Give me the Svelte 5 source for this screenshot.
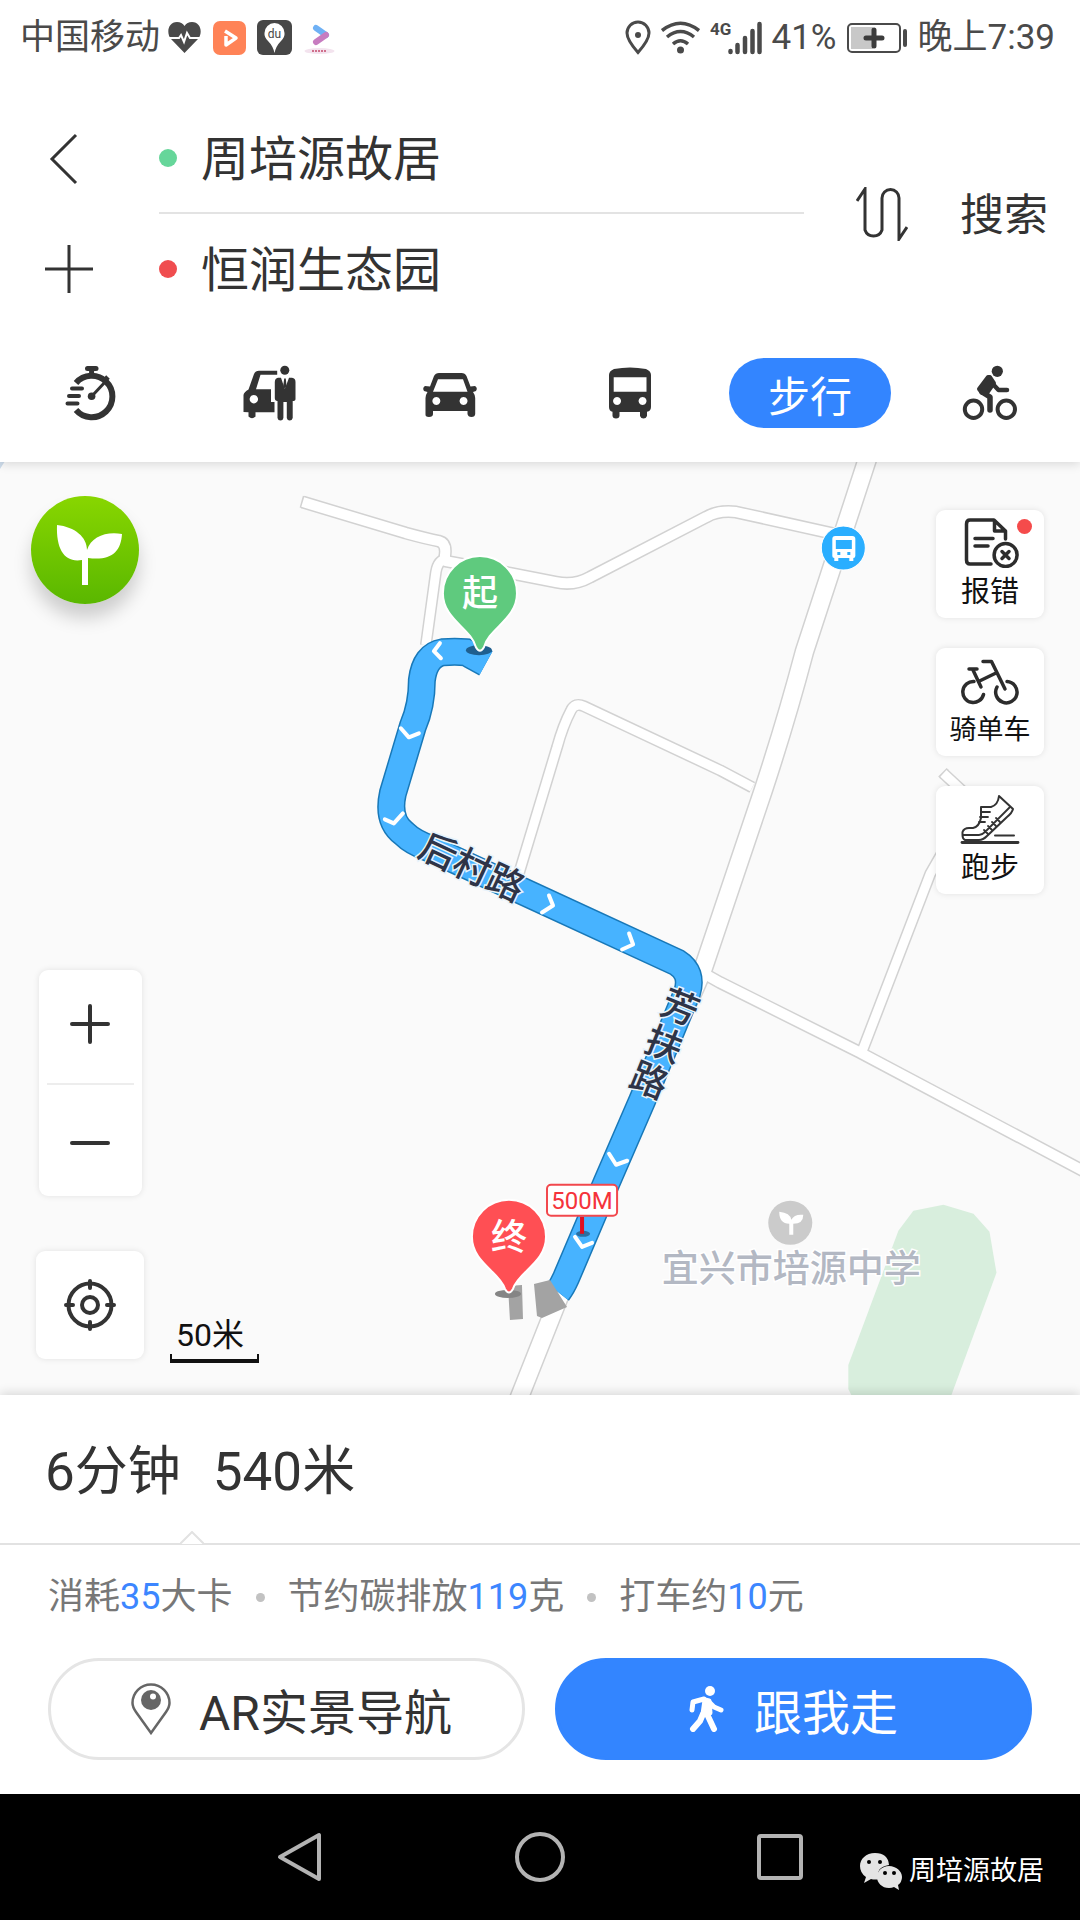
<script>
  let from = '周培源故居';
  let to = '恒润生态园';
  let mode = 'walk';

  const modes = [
    { id: 'smart', label: '智能' },
    { id: 'taxi', label: '打车' },
    { id: 'car', label: '驾车' },
    { id: 'bus', label: '公交' },
    { id: 'walk', label: '步行' },
    { id: 'bike', label: '骑行' },
  ];

  const stats = [
    { before: '消耗', value: 35, after: '大卡' },
    { before: '节约碳排放', value: 119, after: '克' },
    { before: '打车约', value: 10, after: '元' },
  ];

  // Minor roads are 13 wide, the main road is 20
  const roads = [
    { w: 13, d: 'M303 502L406 533Q428 539 439 541Q447 543 445 556L446 561L510 573L556 582Q574 586 590 577L706 517Q718 510 736 512L835 534' },
    { w: 12, d: 'M446 559Q438 560 436 572L426 645' },
    { w: 20, d: 'M870 450L804 652Q786 720 763 790L703 968Q690 1000 683 1010L560 1294L516 1405' },
    { w: 12, d: 'M518 876L557 747Q563 725 571 710Q575 702 584 706L720 770L752 787' },
    { w: 13, d: 'M704 973L720 982L860 1052L1090 1174' },
    { w: 12, d: 'M862 1050L930 873L972 800L943 773' },
  ];

  const routePath =
    'M486 663L466 652Q455 651 443 652Q425 655 422 680Q422 705 413 726L393 793Q387 820 404 833Q413 842 430 848L677 962Q693 972 687 992L642 1100L606 1183L566 1277Q562 1286 558 1291';

  const arrows = [
    '440,643 434,651 441,658',
    '401,728 409,737 419,733',
    '385,819 394,823 403,813',
    '549,895 553,905 542,912',
    '629,933 633,944 622,949',
    '609,1153 616,1164 627,1160',
    '575,1236 582,1246 592,1242',
  ];

  const roadLetters = [
    { char: '芳', x: 680, y: 1007 },
    { char: '扶', x: 664, y: 1044 },
    { char: '路', x: 649, y: 1080 },
  ];
</script>

<div class="screen">
  <header class="top">
    <div class="status">
      <div class="status-side">
        <span>中国移动</span>
        <div class="apps">
          <svg width="35" height="33" viewBox="0 0 35 33">
            <path d="M17.500 32L4 18C-1 12 1 1 10 1Q15 1 17.500 5Q20 1 25 1C34 1 36 12 31 18Z" fill="#4a4a4a" />
            <path d="M0 17H12L14 14L17 21L20 12L23 17H35" fill="none" stroke="#fff" stroke-width="2" />
          </svg>
          <svg width="33" height="34" viewBox="0 0 33 34">
            <rect width="33" height="34" rx="7" fill="#ff8357" />
            <path d="M13 15V24L23 17L12 10" fill="none" stroke="#fff" stroke-width="3.500" stroke-linejoin="round" />
          </svg>
          <svg width="35" height="35" viewBox="0 0 35 35">
            <rect width="35" height="35" rx="6" fill="#474747" />
            <path d="M17.500 33Q16 26 11 21Q7 17 7.500 13A10 10 0 0 1 27.500 13Q28 17 24 21Q19 26 17.500 33Z" fill="#fff" />
            <text x="17.500" y="18" font-size="12" text-anchor="middle" fill="#474747">du</text>
          </svg>
          <svg width="33" height="34" viewBox="0 0 33 34">
            <ellipse cx="16.500" cy="30" rx="15" ry="3" fill="#f3e3ee" />
            <path d="M9 30H24" stroke="#d0708c" stroke-width="2" stroke-dasharray="2 1" />
            <path d="M13 7L23 14" stroke="#6fb1f5" stroke-width="6" stroke-linecap="round" />
            <path d="M23 14L13 21" stroke="#c77cc0" stroke-width="6" stroke-linecap="round" />
          </svg>
        </div>
      </div>
      <div class="status-side signals">
        <svg width="26" height="35" viewBox="0 0 26 35" fill="none" stroke="#4a4a4a" stroke-width="3">
          <path d="M13 32.500Q2 20 2 13A11 11 0 0 1 24 13Q24 20 13 32.500Z" />
          <circle cx="13" cy="15" r="3" fill="#4a4a4a" stroke="none" />
        </svg>
        <svg width="39" height="33" viewBox="0 0 39 33" fill="none" stroke="#4a4a4a" stroke-width="3.500">
          <path d="M1 9.500Q19.500-5 38 9.500M6 16Q19.500 5 33 16M12 23Q19.500 16.500 27 23" />
          <circle cx="19.500" cy="29" r="3.500" fill="#4a4a4a" stroke="none" />
        </svg>
        <svg width="52" height="35" viewBox="0 0 52 35" stroke="#4a4a4a" stroke-width="4.500" stroke-linecap="round">
          <path d="M20.500 31V32M27.500 25V32M35 18V32M42.500 11V32M49.500 4V32" />
          <text x="0" y="15" font-size="17" font-weight="700" stroke="none" fill="#4a4a4a" class="narrow">4G</text>
        </svg>
        <span>41%</span>
        <svg width="61" height="30" viewBox="0 0 61 30">
          <rect x="1" y="1" width="52" height="28" rx="4" fill="none" stroke="#4a4a4a" stroke-width="2" />
          <rect x="4" y="4" width="22" height="22" fill="#c8c8c8" />
          <path d="M27 7V23M19 15H35" stroke="#3c3c3c" stroke-width="5" stroke-linecap="round" />
          <path d="M58 8V22" stroke="#4a4a4a" stroke-width="4" stroke-linecap="round" />
        </svg>
        <span>晚上7:39</span>
      </div>
    </div>

    <form class="planner" on:submit|preventDefault>
      <div class="planner-side">
        <button type="button" aria-label="返回">
          <svg width="60" height="60" viewBox="0 0 60 60"><path d="M40 6L16 30L40 54" /></svg>
        </button>
        <button type="button" aria-label="添加途经点">
          <svg width="60" height="60" viewBox="0 0 60 60"><path d="M9 30H57M33 6V54" /></svg>
        </button>
      </div>
      <div class="fields">
        <label class="field">
          <span class="dot start"></span>
          <input type="text" aria-label="起点" bind:value={from} />
        </label>
        <label class="field">
          <span class="dot end"></span>
          <input type="text" aria-label="终点" bind:value={to} />
        </label>
      </div>
      <button type="button" class="swap" aria-label="交换起终点">
        <svg width="52" height="54" viewBox="0 0 52 54">
          <path d="M1 14L9 2V43A9 9 0 0 0 26 43V11A8 8 0 0 1 43 11V52L51 40" />
        </svg>
      </button>
      <button type="submit" class="search">搜索</button>
    </form>

    <nav class="modes">
      {#each modes as m}
        <button class:active={mode === m.id} aria-label={m.label} on:click={() => (mode = m.id)}>
          {#if m.id === 'smart'}
            <svg width="64" height="64" viewBox="0 0 64 64" fill="none" stroke="#333">
              <path d="M18 22A20.700 20.700 0 1 1 18 49" stroke-width="6" />
              <path d="M14 27.500H24M11 35H21M9.500 42.500H19.500" stroke-width="4" stroke-linecap="round" />
              <path d="M29.500 7.500H38" stroke-width="5" stroke-linecap="round" />
              <path d="M33.600 8V15M46 20L50 16" stroke-width="5" />
              <path d="M34 35L48 20" stroke-width="3" />
              <circle cx="33.600" cy="35.300" r="3.800" fill="#333" stroke="none" />
            </svg>
          {:else if m.id === 'taxi'}
            <svg width="64" height="64" viewBox="0 0 64 64" fill="#333">
              <path fill-rule="evenodd" d="M5.500 51V34Q6 31 10.500 28.500L16 13Q17.500 9.700 21 9.700H39.200V13.700H22.500L18 28.300H33V41H36.500V51.300H17.500V55.500Q14 59 10.500 55.500V51.300ZM15.800 34A4.200 4.200 0 1 0 15.900 34Z" />
              <circle cx="46.800" cy="9.300" r="4.500" />
              <path d="M40 16.700H43L46.800 28L51 16.700H54Q57.500 17 57.500 21V38Q57.500 40 54.700 40V57Q54 59.500 51.700 59.500T48.800 57V41H45.400V57Q45 59.500 42.500 59.500T39.500 57V40Q36.800 40 36.800 37V21Q37 17 40 16.700Z" />
              <path d="M46.200 17.500H47.800L48.500 25L46.800 28L45.200 25Z" />
            </svg>
          {:else if m.id === 'car'}
            <svg width="64" height="64" viewBox="0 0 64 64" fill="#333">
              <path fill-rule="evenodd" d="M16 15Q17.500 12 21 12H43.500Q47 12 48.500 15L52.500 25.500L57 25Q60 27 58 30L55 31Q57.200 34 57.200 37V53Q57 56 53.500 56T49.500 53V50H15V53Q15 56 11 56T7.500 53V37Q7.500 34 9.500 31L6 30Q4 27 7 25L12 25.500ZM20 18.300L15 30.700H49.500L45 18.300ZM18.300 36A4 4 0 1 0 18.400 36ZM45.500 36A4 4 0 1 0 45.600 36Z" />
            </svg>
          {:else if m.id === 'bus'}
            <svg width="64" height="64" viewBox="0 0 64 64" fill="#333">
              <path fill-rule="evenodd" d="M11 14Q11 10 16 8Q32 5 48 8Q53 10 53 14V46Q53 50 49 50.700V55Q48 57.500 45.500 57.500T42 55V51H21.500V55Q21 57.500 18 57.500T14.500 55V50.700Q11 50 11 46ZM15.700 16.300V30.700H48.500V16.300ZM19 36A4 4 0 1 0 19.100 36ZM44.500 36A4 4 0 1 0 44.600 36Z" />
            </svg>
          {:else if m.id === 'bike'}
            <svg width="64" height="64" viewBox="0 0 64 64" fill="none" stroke="#333">
              <circle cx="39.300" cy="10.300" r="5.600" fill="#333" stroke="none" />
              <circle cx="15.500" cy="48.300" r="8.700" stroke-width="4" />
              <circle cx="48.300" cy="48.300" r="8.700" stroke-width="4" />
              <path d="M32 20L40.500 29H49" stroke-width="4.500" stroke-linecap="round" stroke-linejoin="round" />
              <path d="M24 31L32 36V49" stroke-width="5.500" stroke-linecap="round" stroke-linejoin="round" />
              <path d="M30 16L21 28L24 32H29L36 22L32 16Z" fill="#333" stroke-width="4" stroke-linejoin="round" />
            </svg>
          {:else}
            {m.label}
          {/if}
        </button>
      {/each}
    </nav>
  </header>

  <main class="map">
    <svg class="canvas" viewBox="0 462 1080 932" preserveAspectRatio="xMidYMid slice">
      <path d="M0 462H5L0 470Z" fill="#cddbea" />
      <path d="M848 1364L898 1230L913 1210L943 1204L973 1213L989 1231L996 1272L951 1394H851L848 1388Z" fill="#d8eedd" />

      <g fill="none" stroke="#d2d2d2" stroke-linejoin="round">
        {#each roads as road}
          <path d={road.d} stroke-width={road.w} />
        {/each}
        <path d="M301.500 501.600L304 502.300M942 772L944 774" stroke-width="12" />
      </g>
      <g fill="none" stroke="#fff" stroke-linejoin="round">
        {#each roads as road}
          <path d={road.d} stroke-width={road.w - 3} />
        {/each}
      </g>

      <path d={routePath} fill="none" stroke="#1878b8" stroke-width="28" />
      <path d={routePath} fill="none" stroke="#47b3ff" stroke-width="25" />
      <g fill="none" stroke="#fff" stroke-width="4" stroke-linecap="round" stroke-linejoin="round">
        {#each arrows as points}
          <polyline {points} />
        {/each}
      </g>

      <path d="M534 1283L550 1279L567 1306L542 1317L537 1315ZM508 1285L522 1284L523 1318L510 1319Z" fill="#a3a3a3" />

      <g class="road-name">
        <text x="472" y="880" transform="rotate(25 472 867)">后村路</text>
        {#each roadLetters as l}
          <text x={l.x} y={l.y + 13} transform="rotate(22 {l.x} {l.y})">{l.char}</text>
        {/each}
      </g>

      <ellipse cx="479" cy="650" rx="13" ry="5" fill="#1f5f8f" />
      <path d="M480 556A37 37 0 0 1 517 593C517 619 489 628 484 647Q480 654 476 647C471 628 443 619 443 593A37 37 0 0 1 480 556Z" fill="#5fca7e" stroke="#fff" stroke-width="2" />
      <text class="pin" x="480" y="606">起</text>

      <ellipse cx="508" cy="1293" rx="13" ry="4" fill="#858585" />
      <path d="M509 1199A37 37 0 0 1 546 1236C546 1262 518 1271 513 1288Q509 1295 505 1288C500 1271 472 1262 472 1236A37 37 0 0 1 509 1199Z" fill="#ff4f54" stroke="#fff" stroke-width="2" />
      <text class="pin" x="509" y="1249">终</text>

      <ellipse cx="583" cy="1233" rx="7" ry="3" fill="#2a6fa3" />
      <path d="M582 1216V1233" stroke="#e01020" stroke-width="4" />
      <rect x="547" y="1184" width="70" height="31" rx="4" fill="#fff" stroke="#f2484d" stroke-width="2" />
      <text x="582" y="1208" font-size="24" text-anchor="middle" fill="#f5333b">500M</text>

      <circle cx="843" cy="548" r="22" fill="#2aaeff" stroke="#fff" stroke-width="1" />
      <path fill-rule="evenodd" fill="#fff" d="M832 539Q832 536 835 536H852Q855 536 855 539V556Q855 558 853 558V561H849V558H838V561H834V558Q832 558 832 556ZM835.500 540V549H851.500V540ZM837 552V555H840V552ZM847 552V555H850V552Z" />

      <circle cx="790" cy="1222" r="22" fill="#cbcbcb" />
      <path d="M779 1211Q790 1212 791 1219Q794 1213 803 1214Q803 1223 793 1223V1234H789V1223Q779 1223 779 1211Z" fill="#fff" />
      <text class="place" x="791" y="1281">宜兴市培源中学</text>
    </svg>

    <button class="green-trip" aria-label="绿色出行">
      <svg width="108" height="108" viewBox="0 0 108 108" fill="#fff">
        <path d="M26 29C44 31 56 41 56 54C60 41 75 35 91 38C90 56 80 65 57 62V89H51V64C34 67 25 54 26 29Z" />
      </svg>
    </button>

    <div class="tools">
      <button class="tool">
        <svg width="60" height="50" viewBox="0 0 60 50" fill="none" stroke="#2c2c2c" stroke-width="3.500" stroke-linecap="round" stroke-linejoin="round">
          <path d="M31 46H10Q6.500 46 6.500 42V6Q6.500 2 10 2H34L45.500 13V21M34.500 3V13H45" />
          <path d="M15 20.500H33M15 28H28" />
          <circle cx="45.600" cy="37" r="11.500" />
          <path d="M42 33.500L49 40.500M49 33.500L42 40.500" />
        </svg>
        <span>报错</span>
        <i class="badge"></i>
      </button>
      <button class="tool">
        <svg width="60" height="50" viewBox="0 0 60 50" fill="none" stroke="#2c2c2c" stroke-width="3.500" stroke-linecap="round" stroke-linejoin="round">
          <path d="M14 25.500A10.500 10.500 0 1 0 23.500 38.500M37 31A10.700 10.700 0 1 0 47 25.500" />
          <path d="M9 13H17M13 14L21 31M18.500 25.500L35 17.500M23 5.500H31.500L45 33" />
        </svg>
        <span class="small">骑单车</span>
      </button>
      <button class="tool">
        <svg width="60" height="50" viewBox="0 0 60 50" fill="none" stroke="#333" stroke-width="2" stroke-linecap="round" stroke-linejoin="round">
          <path d="M39 2L53 15Q52 19 47 23L27 42Q23 46 19 46H5Q2.500 45 2.500 41V38Q4 34 9 34H13Q19 33 21 24V13H31Q38 11 39 2Z" />
          <path d="M3 41H19Q22 41 25 38L50 13M24 36L28 40M28 32L32 36M32 28L36 32M36 24L40 28M22 18H30M20 23H28M19 28H25" stroke-width="1.800" />
          <path d="M35 41.500H54" />
          <path d="M2 48.500H58" stroke-width="2.800" />
        </svg>
        <span>跑步</span>
      </button>
    </div>

    <div class="corner">
      <div class="position">
        <div class="zoom">
          <button aria-label="放大"><svg width="44" height="44" viewBox="0 0 44 44"><path d="M4 22H40M22 4V40" /></svg></button>
          <button aria-label="缩小"><svg width="44" height="44" viewBox="0 0 44 44"><path d="M4 22H40" /></svg></button>
        </div>
        <button class="locate" aria-label="定位">
          <svg width="54" height="54" viewBox="0 0 54 54">
            <circle cx="27" cy="27" r="21.500" />
            <circle cx="27" cy="27" r="8" />
            <path d="M27 3V10M27 44V51M3 27H10M44 27H51" />
          </svg>
        </button>
      </div>
      <div class="scale">50米</div>
    </div>
  </main>

  <section class="sheet">
    <div class="summary">
      <span>6分钟</span>
      <span>540米</span>
      <svg class="notch" width="24" height="14" viewBox="0 0 24 14">
        <path d="M0 13L12 1L24 13" fill="#fff" stroke="#e2e2e2" stroke-width="2" />
      </svg>
    </div>
    <ul class="stats">
      {#each stats as s}
        <li>{s.before}<b>{s.value}</b>{s.after}</li>
      {/each}
    </ul>
    <div class="actions">
      <button class="ar">
        <svg width="40" height="52" viewBox="0 0 40 52">
          <path d="M20 50L5 29Q1.500 24 1.500 20A18.500 18.500 0 0 1 38.500 20Q38.500 24 35 29Z" fill="none" stroke="#666" stroke-width="2.500" />
          <circle cx="20" cy="17" r="10" fill="#666" />
          <circle cx="22" cy="13.500" r="3" fill="#fff" />
        </svg>
        AR实景导航
      </button>
      <button class="primary">
        <svg width="35" height="46" viewBox="0 0 35 46" fill="none" stroke="#fff" stroke-linecap="round" stroke-linejoin="round">
          <circle cx="21" cy="5" r="5" fill="#fff" stroke="none" />
          <path d="M16 14L14 28L21 27L20 15Z" fill="#fff" stroke-width="5" />
          <path d="M15 13L4 16L3 24M20 16L25 21L32 24" stroke-width="5" />
          <path d="M14 28L11 35L4 43M18 28L25 43" stroke-width="6" />
        </svg>
        跟我走
      </button>
    </div>
  </section>

  <footer class="system">
    <button aria-label="后退">
      <svg width="50" height="50" viewBox="0 0 50 50"><path d="M44 3V47L5 25Z" /></svg>
    </button>
    <button aria-label="主页">
      <svg width="50" height="50" viewBox="0 0 50 50"><circle cx="25" cy="25" r="23" /></svg>
    </button>
    <button aria-label="最近任务">
      <svg width="50" height="50" viewBox="0 0 50 50"><rect x="4" y="4" width="42" height="42" rx="2" /></svg>
    </button>
    <div class="account">
      <svg width="42" height="37" viewBox="0 0 42 37">
        <path d="M15 0C6 0 0 6 0 13Q0 20 6 24L4 30L11 26Q15 27 19 26Q15 14 29 12Q28 0 15 0Z" fill="#e4e4e4" />
        <path d="M29 13C22 13 17 18 17 24S22 35 29 35Q32 35 34 34L39 37L38 32Q42 29 42 24C42 18 36 13 29 13Z" fill="#e4e4e4" />
        <g fill="#000"><circle cx="9" cy="9" r="2" /><circle cx="20" cy="9" r="2" /><circle cx="25" cy="20" r="2" /><circle cx="34" cy="20" r="2" /></g>
      </svg>
      <span>周培源故居</span>
    </div>
  </footer>
</div>

<style>
  :global(body) {
    margin: 0;
    background: #fff;
  }

  .screen {
    display: flex;
    flex-direction: column;
    min-height: 100vh;
    color: #333;
    font-family: Roboto, 'Noto Sans CJK SC', sans-serif;
  }

  button {
    display: flex;
    align-items: center;
    justify-content: center;
    box-sizing: border-box;
    padding: 0;
    border: none;
    background: none;
    color: inherit;
    font: inherit;
    cursor: pointer;
  }

  svg {
    display: block;
    flex-shrink: 0;
  }

  .top {
    position: relative;
    z-index: 1;
    background: #fff;
    box-shadow: 0 2px 10px rgba(0, 0, 0, 0.14);
  }

  .status {
    display: flex;
    justify-content: space-between;
    align-items: center;
    height: 75px;
    padding: 0 25px 0 20px;
    color: #4a4a4a;
    font-size: 35px;
    line-height: 40px;
  }

  .status-side {
    display: flex;
    align-items: center;
    gap: 7px;
  }

  .signals {
    gap: 10px;
  }

  .apps {
    display: flex;
    align-items: center;
    gap: 11px;
  }

  .narrow {
    font-family: 'Liberation Sans Narrow', Roboto, sans-serif;
  }

  .planner {
    display: flex;
    align-items: center;
    padding: 29px 32px 0 0;
  }

  .planner-side {
    width: 132px;
    margin-right: 27px;
  }

  .planner-side button {
    width: 100%;
    height: 110px;
  }

  .planner svg {
    fill: none;
    stroke: #333;
    stroke-width: 3;
  }

  .fields {
    flex: 1;
    min-width: 0;
  }

  .field {
    display: flex;
    align-items: center;
    gap: 24px;
    height: 110px;
    box-sizing: border-box;
  }

  .field:first-child {
    border-bottom: 2px solid #e3e3e3;
  }

  .field input {
    flex: 1;
    min-width: 0;
    padding: 3px 0 0;
    border: none;
    outline: none;
    background: none;
    color: #333;
    font: inherit;
    font-size: 48px;
    line-height: 64px;
  }

  .dot {
    width: 18px;
    height: 18px;
    border-radius: 50%;
  }

  .start {
    background: #66d69a;
  }

  .end {
    background: #f04d4f;
  }

  .swap {
    margin: 0 52px;
  }

  .search {
    padding-top: 4px;
    font-size: 44px;
    line-height: 64px;
  }

  .modes {
    display: grid;
    grid-template-columns: repeat(6, 1fr);
    align-items: center;
    justify-items: center;
    height: 138px;
  }

  .modes .active {
    width: 162px;
    height: 70px;
    border-radius: 35px;
    background: #3385ff;
    color: #fff;
    font-size: 42px;
  }

  .map {
    position: relative;
    flex: 1;
    min-height: 900px;
    background: #fafafa;
    overflow: hidden;
  }

  .canvas {
    position: absolute;
    width: 100%;
    height: 100%;
  }

  .road-name {
    fill: #2e3447;
    stroke: #e8f3fb;
    stroke-width: 3px;
    paint-order: stroke;
    font-size: 37px;
    font-weight: 500;
    text-anchor: middle;
  }

  .pin {
    fill: #fff;
    font-size: 36px;
    font-weight: 500;
    text-anchor: middle;
  }

  .place {
    fill: #b3b8c3;
    stroke: #fff;
    stroke-width: 3px;
    paint-order: stroke;
    font-size: 37px;
    font-weight: 500;
    text-anchor: middle;
  }

  .green-trip {
    position: absolute;
    top: 34px;
    left: 31px;
    border-radius: 50%;
    background: linear-gradient(#88d600, #5ab700);
    box-shadow: 0 14px 18px rgba(0, 0, 0, 0.18);
  }

  .tools {
    position: absolute;
    top: 48px;
    right: 36px;
    display: flex;
    flex-direction: column;
    gap: 30px;
  }

  .tool,
  .zoom,
  .locate {
    border-radius: 9px;
    background: #fff;
    box-shadow: 0 0 6px rgba(0, 0, 0, 0.1);
  }

  .tool {
    position: relative;
    flex-direction: column;
    gap: 6px;
    width: 108px;
    height: 108px;
    color: #111;
    font-size: 29px;
    line-height: 36px;
  }

  .small {
    font-size: 27px;
  }

  .badge {
    position: absolute;
    top: 9px;
    right: 12px;
    width: 15px;
    height: 15px;
    border-radius: 50%;
    background: #f54b4b;
  }

  .corner {
    position: absolute;
    left: 36px;
    bottom: 36px;
    display: flex;
    align-items: flex-end;
    gap: 26px;
  }

  .position {
    display: flex;
    flex-direction: column;
    align-items: center;
    gap: 55px;
  }

  .zoom {
    width: 103px;
    padding: 0 8px;
    box-sizing: border-box;
  }

  .zoom button {
    width: 100%;
    height: 113px;
  }

  .zoom button:first-child {
    padding-bottom: 6px;
  }

  .zoom button + button {
    padding-top: 4px;
    border-top: 2px solid #ededed;
  }

  .zoom svg,
  .locate svg {
    fill: none;
    stroke: #333;
    stroke-width: 4;
    stroke-linecap: round;
  }

  .locate {
    width: 108px;
    height: 108px;
  }

  .scale {
    position: relative;
    bottom: -4px;
    width: 89px;
    box-sizing: border-box;
    padding: 0 0 6px 6px;
    border-bottom: 4px solid #111;
    background:
      linear-gradient(#111, #111) left bottom / 2px 5px no-repeat,
      linear-gradient(#111, #111) right bottom / 2px 5px no-repeat;
    color: #111;
    font-size: 32px;
    line-height: 36px;
  }

  .sheet {
    position: relative;
    z-index: 1;
    background: #fff;
    box-shadow: 0 -2px 10px rgba(0, 0, 0, 0.14);
  }

  .summary {
    position: relative;
    display: flex;
    align-items: center;
    gap: 32px;
    height: 144px;
    padding: 0 45px 4px;
    border-bottom: 2px solid #e2e2e2;
    font-size: 53px;
  }

  .notch {
    position: absolute;
    left: 180px;
    bottom: -2px;
  }

  .stats {
    display: flex;
    align-items: center;
    margin: 0;
    padding: 27px 48px 36px;
    list-style: none;
    color: #777;
    font-size: 36px;
    line-height: 50px;
  }

  .stats li {
    display: flex;
    align-items: center;
    white-space: nowrap;
  }

  .stats li + li::before {
    content: '';
    width: 9px;
    height: 9px;
    margin: 0 23px;
    border-radius: 50%;
    background: #c2c2c2;
  }

  .stats b {
    color: #3c86ff;
    font-weight: 400;
  }

  .actions {
    display: grid;
    grid-template-columns: 1fr 1fr;
    gap: 30px;
    padding: 0 48px 34px;
  }

  .actions button {
    gap: 28px;
    height: 102px;
    border: 3px solid #e5e5e5;
    border-radius: 51px;
    font-size: 48px;
  }

  .actions .ar {
    padding-left: 10px;
  }

  .actions .primary {
    gap: 30px;
    border-color: #3385ff;
    background: #3385ff;
    color: #fff;
  }

  .system {
    position: relative;
    z-index: 1;
    display: flex;
    justify-content: center;
    height: 126px;
    background: #000;
  }

  .system button {
    width: 240px;
    height: 126px;
  }

  .system button svg {
    fill: none;
    stroke: #b3b3b3;
    stroke-width: 4;
    stroke-linejoin: round;
  }

  .account {
    position: absolute;
    right: 36px;
    bottom: 29px;
    display: flex;
    align-items: center;
    gap: 7px;
    color: #fff;
    font-size: 27px;
    line-height: 40px;
  }
</style>
